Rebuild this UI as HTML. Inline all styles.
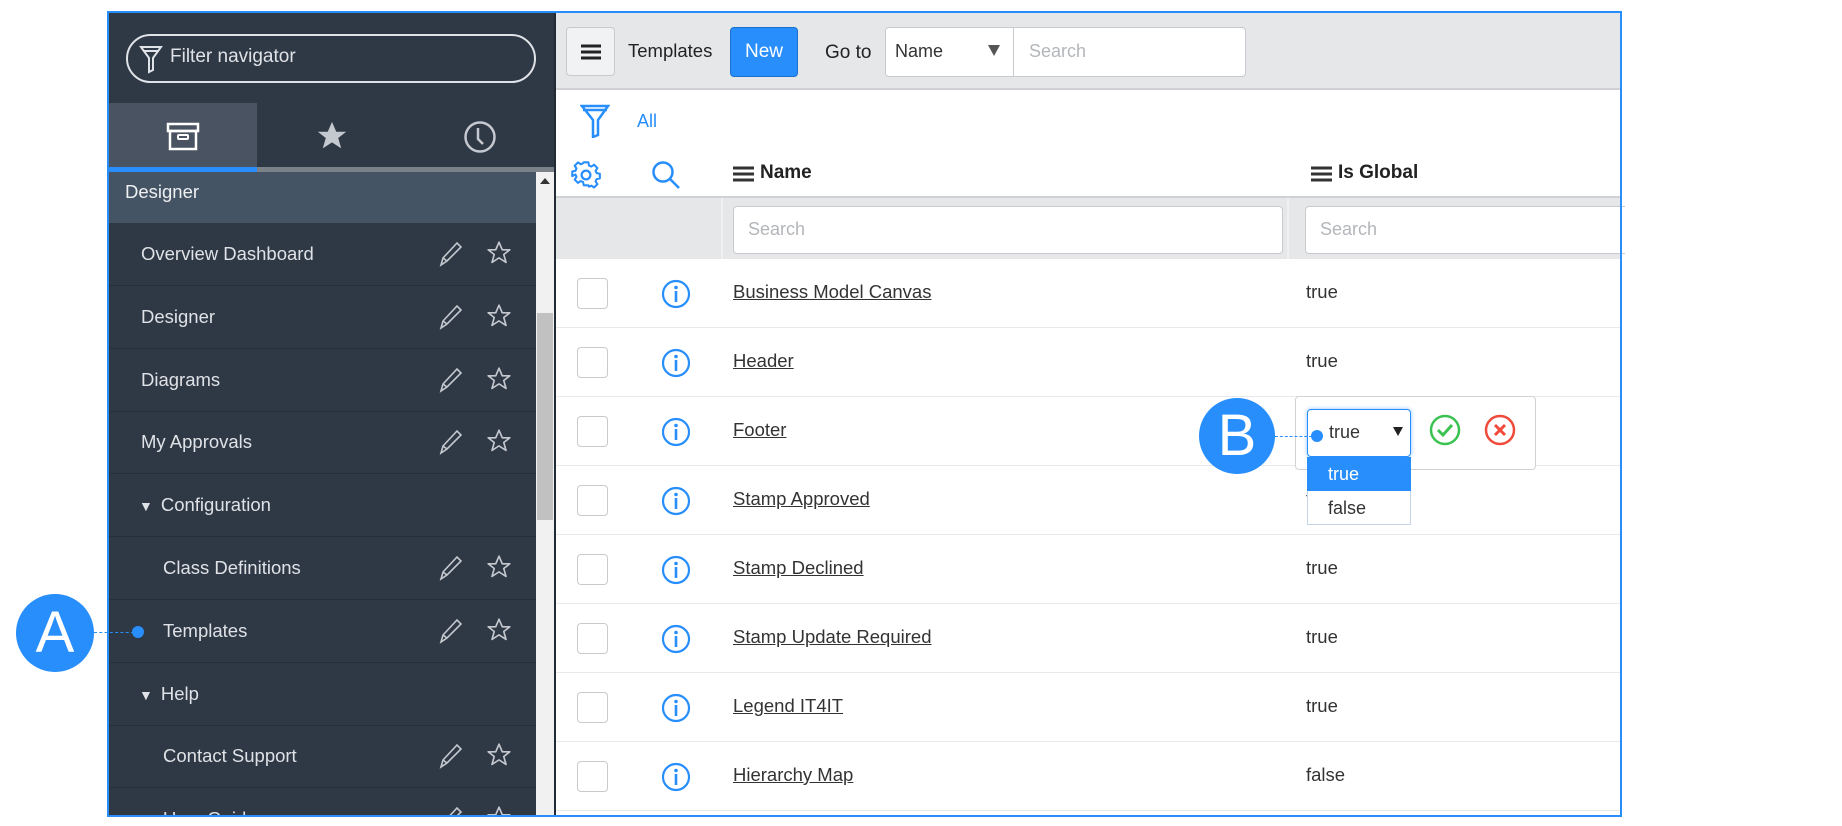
<!DOCTYPE html>
<html><head><meta charset="utf-8"><style>
*{box-sizing:border-box;margin:0;padding:0}
html{overflow:hidden;width:1842px;height:826px}
body{width:1842px;height:826px;background:#fff;position:relative;overflow:hidden;font-family:"Liberation Sans",sans-serif}
.a{position:absolute}
svg{display:block}
.sb{left:108px;top:12px;width:448px;height:803px;background:#2f3845;overflow:hidden}
.nav{position:absolute;left:0;width:428px;height:63px;border-bottom:1px solid #26303a;color:#dfe2e6;font-size:18.5px;line-height:62px}
.ic{position:absolute;top:18px;line-height:0}
.row{position:absolute;left:556px;width:1064px;height:69px;border-bottom:1px solid #e8e9eb}
.cb{position:absolute;left:21px;top:19px;width:31px;height:31px;border:1.5px solid #c8cacd;border-radius:4px;background:#fff}
.nm{position:absolute;left:177px;top:22px;font-size:18.5px;color:#333;text-decoration:underline}
.vl{position:absolute;left:750px;top:22px;font-size:18.5px;color:#333}
</style></head><body>
<div class="a sb">
  <div class="a" style="left:18px;top:22px;width:410px;height:49px;border:2px solid #dfe2e6;border-radius:25px"></div>
  <svg class="a" style="left:30px;top:32px" width="26" height="30" viewBox="0 0 26 30"><path d="M3 3h20l-8 11v12l-4 2V14z M5 7h16" fill="none" stroke="#dfe2e6" stroke-width="2"/></svg>
  <div class="a" style="left:62px;top:34px;font-size:19px;color:#dfe2e6">Filter navigator</div>
  <div class="a" style="left:0;top:91px;width:149px;height:64px;background:#4a5361"></div>
  <svg class="a" style="left:58px;top:110px" width="34" height="30" viewBox="0 0 34 30"><rect x="2" y="2" width="30" height="7" fill="none" stroke="#fff" stroke-width="2.5"/><rect x="4" y="9" width="26" height="18" fill="none" stroke="#fff" stroke-width="2.5"/><rect x="12" y="13" width="10" height="4" rx="1" fill="none" stroke="#fff" stroke-width="2"/></svg>
  <svg class="a" style="left:207px;top:107px" width="34" height="34" viewBox="0 0 24 24"><path d="M12 2l3 7h7l-5.6 4.4 2.1 7.3L12 16.5 5.5 20.7l2.1-7.3L2 9h7z" fill="#c5c9cf"/></svg>
  <svg class="a" style="left:355px;top:108px" width="34" height="34" viewBox="0 0 34 34"><circle cx="17" cy="17" r="14.5" fill="none" stroke="#c5c9cf" stroke-width="2.5"/><path d="M15 8v11l5 5" fill="none" stroke="#c5c9cf" stroke-width="2.5"/></svg>
  <div class="a" style="left:0;top:155px;width:448px;height:5px;background:#7b8189"></div>
  <div class="a" style="left:0;top:155px;width:149px;height:5px;background:#278efc"></div>
  <div class="a" style="left:0;top:160px;width:428px;height:51px;background:#455464;color:#eef0f2;font-size:18.5px;line-height:40px;padding-left:17px">Designer</div>
  <div id="nav"></div>
  <div class="a" style="left:428px;top:160px;width:18px;height:643px;background:#f1f1f1"></div>
  <div class="a" style="left:432px;top:166px;width:0;height:0;border-left:5px solid transparent;border-right:5px solid transparent;border-bottom:6px solid #333"></div>
  <div class="a" style="left:429px;top:301px;width:16px;height:207px;background:#c1c1c1"></div>
  <div class="a" style="left:446px;top:0;width:2px;height:803px;background:#222a33"></div>
</div>
<div class="a" style="left:556px;top:13px;width:1064px;height:77px;background:#e6e7e9;border-bottom:2px solid #cfd1d4"></div>
<div class="a" style="left:566px;top:27px;width:49px;height:49px;background:#f1f2f3;border:1.5px solid #c8cacd;border-radius:4px"></div>
<svg class="a" style="left:581px;top:43px" width="20" height="18"><path d="M0 3h20M0 9h20M0 15h20" stroke="#222" stroke-width="3"/></svg>
<div class="a" style="left:628px;top:40px;font-size:18.5px;color:#222">Templates</div>
<div class="a" style="left:730px;top:27px;width:68px;height:50px;background:#278efc;border:1px solid #1a6fd0;border-radius:4px;color:#fff;font-size:19px;line-height:48px;text-align:center">New</div>
<div class="a" style="left:825px;top:42px;font-size:19px;color:#222">Go to</div>
<div class="a" style="left:885px;top:27px;width:361px;height:50px;background:#fff;border:1.5px solid #c8cacd;border-radius:4px"></div>
<div class="a" style="left:1013px;top:28px;width:1px;height:48px;background:#c8cacd"></div>
<div class="a" style="left:895px;top:41px;font-size:18px;color:#333">Name</div>
<div class="a" style="left:988px;top:45px;border-left:6px solid transparent;border-right:6px solid transparent;border-top:11px solid #555"></div>
<div class="a" style="left:1029px;top:41px;font-size:18px;color:#b3b6ba">Search</div>
<svg class="a" style="left:580px;top:103px" width="30" height="35" viewBox="0 0 30 35"><path d="M2 3h26l-10 14v15l-5 2V17z M3 7h24" fill="none" stroke="#278efc" stroke-width="2.5"/></svg>
<div class="a" style="left:637px;top:111px;font-size:18px;color:#278efc">All</div>
<svg class="a" style="left:571px;top:160px" width="30" height="30" viewBox="0 0 24 24"><path d="M10 2h4l.6 2.8 2 .9 2.4-1.6 2.9 2.9-1.6 2.4.9 2 2.8.6v4l-2.8.6-.9 2 1.6 2.4-2.9 2.9-2.4-1.6-2 .9L14 22h-4l-.6-2.8-2-.9-2.4 1.6-2.9-2.9 1.6-2.4-.9-2L0 14v-4l2.8-.6.9-2-1.6-2.4 2.9-2.9 2.4 1.6 2-.9z" transform="translate(1 0) scale(.92)" fill="none" stroke="#278efc" stroke-width="1.8" stroke-linejoin="round"/><circle cx="12" cy="12" r="3.5" fill="none" stroke="#278efc" stroke-width="1.8"/></svg>
<svg class="a" style="left:651px;top:160px" width="32" height="32" viewBox="0 0 32 32"><circle cx="12" cy="12" r="9.5" fill="none" stroke="#278efc" stroke-width="2.5"/><path d="M19 19l9 9" stroke="#278efc" stroke-width="2.5"/></svg>
<svg class="a" style="left:733px;top:166px" width="21" height="16"><path d="M0 2h21M0 8h21M0 14h21" stroke="#333" stroke-width="3"/></svg>
<div class="a" style="left:760px;top:162px;font-size:19px;color:#222;font-weight:bold">Name</div>
<svg class="a" style="left:1311px;top:166px" width="21" height="16"><path d="M0 2h21M0 8h21M0 14h21" stroke="#333" stroke-width="3"/></svg>
<div class="a" style="left:1338px;top:162px;font-size:19px;color:#222;font-weight:bold">Is Global</div>
<div class="a" style="left:556px;top:196px;width:1064px;height:63px;background:#e6e7e9;border-top:2px solid #cfd1d4"></div>
<div class="a" style="left:721px;top:198px;width:2px;height:61px;background:#eef0f1"></div>
<div class="a" style="left:1287px;top:198px;width:2px;height:61px;background:#eef0f1"></div>
<div class="a" style="left:733px;top:206px;width:550px;height:48px;background:#fff;border:1.5px solid #c8cacd;border-radius:4px;font-size:18px;color:#b3b6ba;line-height:45px;padding-left:14px">Search</div>
<div class="a" style="left:1305px;top:206px;width:320px;height:48px;background:#fff;border:1.5px solid #c8cacd;border-right:none;border-radius:4px 0 0 4px;font-size:18px;color:#b3b6ba;line-height:45px;padding-left:14px">Search</div>
<div id="rows"></div>
<div class="a" style="left:0;top:815px;width:1842px;height:11px;background:#fff"></div>
<div class="a" style="left:1295px;top:396px;width:241px;height:74px;background:#fff;border:1.5px solid #d0d2d5;border-radius:4px"></div>
<div class="a" style="left:1307px;top:409px;width:104px;height:48px;background:#fff;border:1.5px solid #278efc;border-radius:4px;box-shadow:0 0 4px #8fc2fd"></div>
<div class="a" style="left:1329px;top:422px;font-size:18px;color:#333">true</div>
<div class="a" style="left:1393px;top:427px;border-left:5px solid transparent;border-right:5px solid transparent;border-top:9px solid #222"></div>
<div class="a" style="left:1307px;top:457px;width:104px;height:68px;background:#fff;border:1px solid #c4d5ea"></div>
<div class="a" style="left:1307px;top:457px;width:104px;height:34px;background:#278efc;color:#fff;font-size:18px;line-height:34px;padding-left:21px">true</div>
<div class="a" style="left:1328px;top:498px;font-size:18px;color:#333">false</div>
<svg class="a" style="left:1429px;top:414px" width="32" height="32" viewBox="0 0 32 32"><circle cx="16" cy="16" r="14" fill="none" stroke="#3cc251" stroke-width="2.5"/><path d="M9 16l5 5 9-10" fill="none" stroke="#3cc251" stroke-width="3"/></svg>
<svg class="a" style="left:1484px;top:414px" width="32" height="32" viewBox="0 0 32 32"><circle cx="16" cy="16" r="14" fill="none" stroke="#f04a3a" stroke-width="2.5"/><path d="M11 11l10 10M21 11l-10 10" stroke="#f04a3a" stroke-width="3"/></svg>
<div class="a" style="left:1199px;top:398px;width:76px;height:76px;border-radius:50%;background:#278efc;color:#fff;font-size:58px;line-height:76px;text-align:center">B</div>
<div class="a" style="left:1275px;top:436px;width:42px;border-top:1.5px dashed #278efc"></div>
<div class="a" style="left:1311px;top:430px;width:12px;height:12px;border-radius:50%;background:#278efc"></div>
<div class="a" style="left:107px;top:11px;width:1515px;height:806px;border:2px solid #278efc"></div>
<div class="a" style="left:16px;top:594px;width:78px;height:78px;border-radius:50%;background:#278efc;color:#fff;font-size:58px;line-height:78px;text-align:center">A</div>
<div class="a" style="left:94px;top:632px;width:40px;border-top:1.5px dashed #278efc"></div>
<div class="a" style="left:132px;top:626px;width:12px;height:12px;border-radius:50%;background:#278efc"></div>
<script>
var items=[["Overview Dashboard",0,1],["Designer",0,1],["Diagrams",0,1],["My Approvals",0,1],["Configuration",2,0],["Class Definitions",1,1],["Templates",1,1],["Help",2,0],["Contact Support",1,1],["User Guide",1,1]];
var pen='<svg width="26" height="26" viewBox="0 0 26 26"><path d="M3 24l2-7L19 2l4 4L9 20z M5 17l4 3" fill="none" stroke="#c5c9cf" stroke-width="1.6"/></svg>';
var st='<svg width="28" height="26" viewBox="0 0 24 24"><path d="M12 2l3 7h7l-5.6 4.4 2.1 7.3L12 16.5 5.5 20.7l2.1-7.3L2 9h7z" fill="none" stroke="#c5c9cf" stroke-width="1.5" stroke-linejoin="round"/></svg>';
var h='';
items.forEach(function(it,i){var t=211+i*62.8;var pl=it[1]==0?33:55;
var txt=it[1]==2?'<span style="font-size:14px;margin-right:8px">&#9660;</span>'+it[0]:it[0];
if(it[1]==2)pl=31;
h+='<div class="nav" style="top:'+t+'px;padding-left:'+pl+'px">'+txt+(it[2]?'<div class="ic" style="left:330px">'+pen+'</div><div class="ic" style="left:377px;top:17px">'+st+'</div>':'')+'</div>';});
document.getElementById('nav').innerHTML=h;
var rows=[["Business Model Canvas","true"],["Header","true"],["Footer",""],["Stamp Approved","t"],["Stamp Declined","true"],["Stamp Update Required","true"],["Legend IT4IT","true"],["Hierarchy Map","false"]];
var r='';rows.forEach(function(x,i){var t=259+i*69;
r+='<div class="row" style="top:'+t+'px"><div class="cb"></div><svg class="a" style="left:105px;top:20px" width="30" height="30" viewBox="0 0 30 30"><circle cx="15" cy="15" r="13" fill="none" stroke="#278efc" stroke-width="2.2"/><circle cx="15" cy="8.5" r="1.8" fill="#278efc"/><path d="M15 12v11" stroke="#278efc" stroke-width="2.6"/></svg><div class="nm">'+x[0]+'</div><div class="vl">'+x[1]+'</div></div>';});
document.getElementById('rows').innerHTML=r;
</script>
</body></html>
